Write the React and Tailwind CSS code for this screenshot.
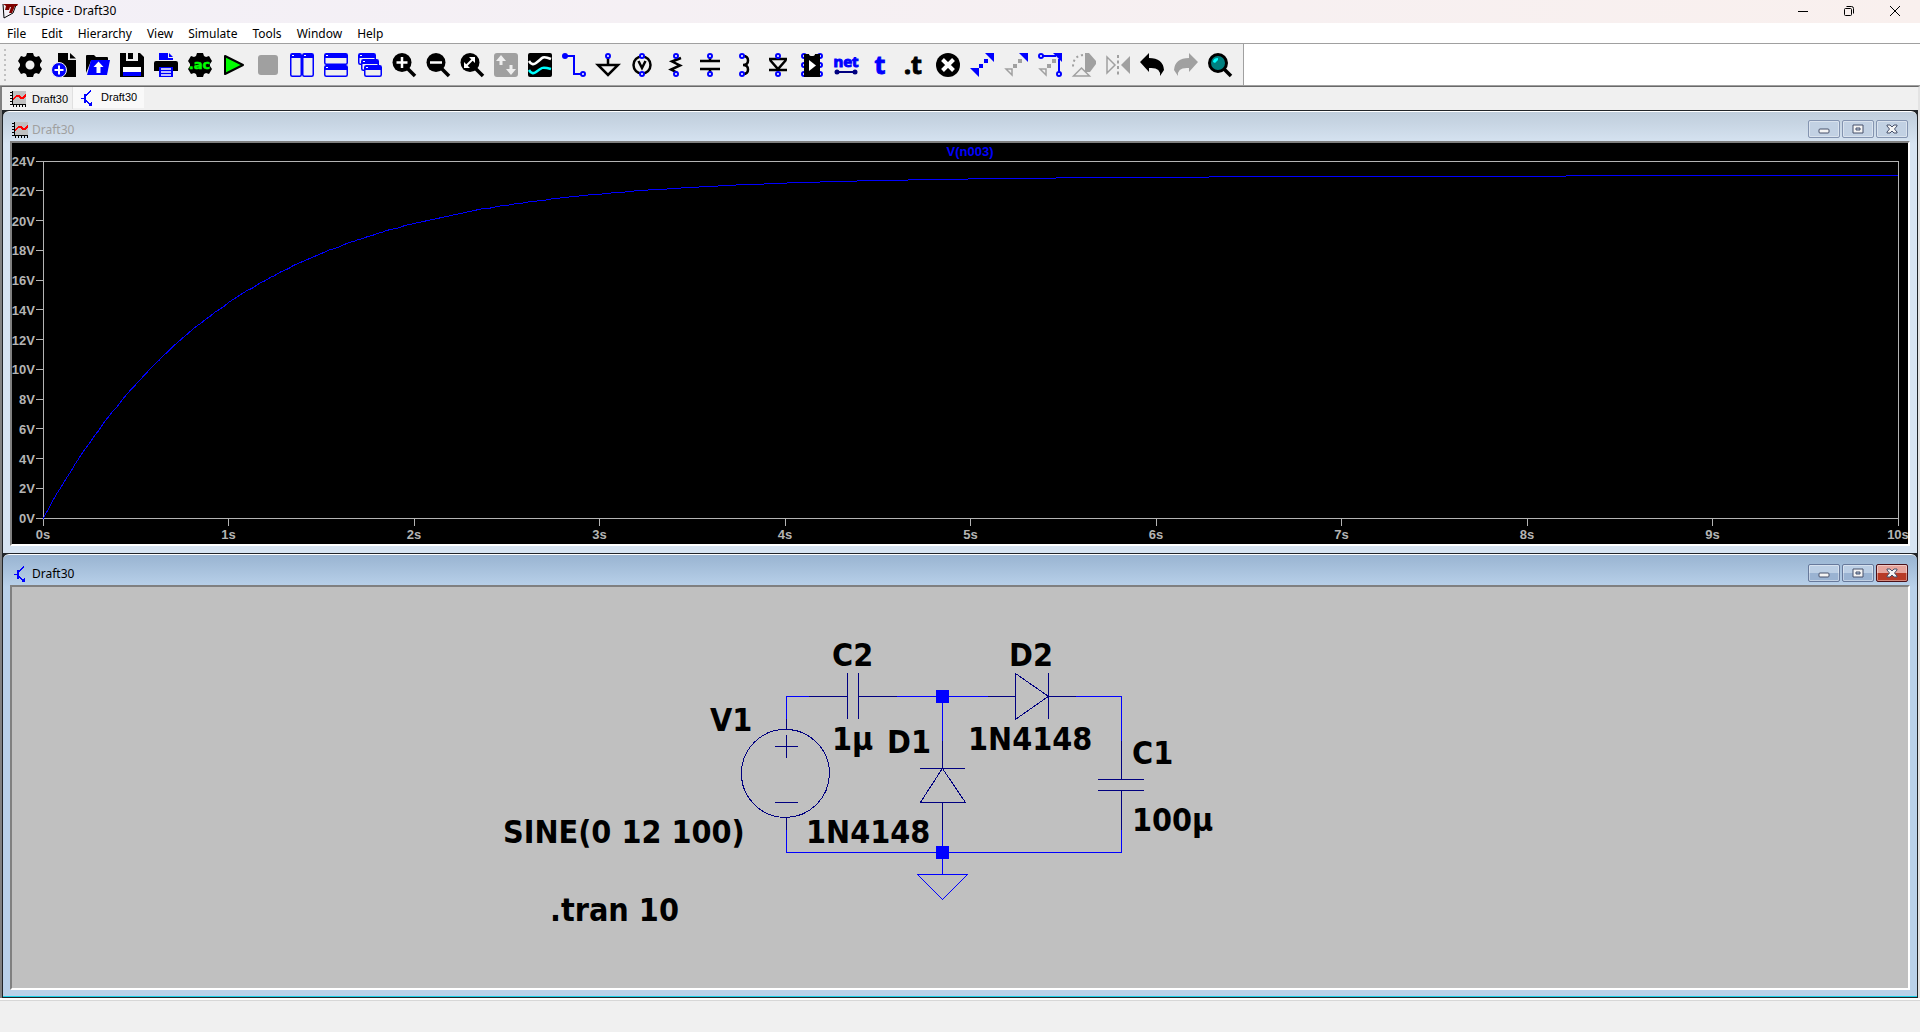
import { useState } from 'react';

const BLUE = '#0000ff';
const NAVY = '#000080';
const GRAY = '#a0a0a0';

const menus = ['File', 'Edit', 'Hierarchy', 'View', 'Simulate', 'Tools', 'Window', 'Help'];

const GEAR = 'M8 3 9 0h6l1 3 2 1 3-1 3 5-2 3v2l2 3-3 5-3-1-2 1-1 3H9l-1-3-2-1-3 1-3-5 2-3v-2L0 8l3-5 3 1z';

// Small open terminal used on the component icons
const Pin = ({ x, y }) => <circle cx={x} cy={y} r="2" fill="#fff" stroke={BLUE} strokeWidth="2" />;

const Lens = ({ children }) => (
  <>
    <path d="m15 15 8 8" stroke="#000" strokeWidth="3.5" />
    <circle cx="10" cy="9.5" r="9.5" />
    {children}
  </>
);

const MiniWindow = ({ x, y, w, h }) => (
  <>
    <rect x={x + 0.75} y={y + 0.75} width={w - 1.5} height={h - 1.5} rx="1.5" fill="#efefef" stroke={BLUE} strokeWidth="1.5" />
    <path d={`M${x + 1} ${y + 1}h${w - 2}v4h-${w - 2}z`} fill={BLUE} />
    <path d={`M${x + 2} ${y + 2}h2v1h-2z`} fill="#fff" />
  </>
);

// Every toolbar glyph lives on a 24x24 grid
const tools = [
  { name: 'Settings', icon: <path fillRule="evenodd" d={`${GEAR}M12 7.5a4.5 4.5 0 1 0 0 9 4.5 4.5 0 0 0 0-9z`} /> },
  {
    name: 'New schematic',
    icon: (
      <>
        <path d="M6 0h10v7h8v17H6zM18 0l6 5.5h-6z" />
        <circle cx="7" cy="17" r="7.5" fill={BLUE} stroke="#efefef" />
        <path d="M7 12.5v9M2.500 17h9" stroke="#fff" strokeWidth="2" />
      </>
    ),
  },
  {
    name: 'Open',
    icon: (
      <>
        <path d="M0 20V3q0-1 1-1h7l2 2h11q1 0 1 1v3H5z" />
        <path d="M5 7h19l-3 15H1z" fill={BLUE} />
        <path d="m12.500 8.500 5 5.500h-3v6h-4v-6h-3z" fill="#fff" />
      </>
    ),
  },
  {
    name: 'Save',
    icon: (
      <>
        <path d="M0 0h20l4 4v20H0z" />
        <path d="M6 0h12v8H6z" fill="#efefef" />
        <path d="M8 0h5v6H8z" />
        <path d="M3 14h18v5H3z" fill="#fff" />
        <path d="M3 19h18v4H3z" fill={BLUE} />
      </>
    ),
  },
  {
    name: 'Print',
    icon: (
      <>
        <path d="M5 0h9v5h5v2H5zM15 0l4 4h-4z" fill={BLUE} />
        <path d="M2 8h20q2 0 2 2v8h-5v-4H5v4H0v-8q0-2 2-2z" />
        <path d="M5 14h14v10H5z" fill={BLUE} />
        <path d="M7 16h10M7 19h10M7 22h10" stroke="#fff" strokeWidth="1.5" />
      </>
    ),
  },
  {
    name: 'Configure analysis',
    icon: (
      <>
        <path d={GEAR} />
        <text x="11.500" y="16" textAnchor="middle" fill="#00ff00" stroke="#00ff00" strokeWidth="0.500" className="font-[DejaVu_Sans,sans-serif] text-[13px] font-bold">.ac</text>
      </>
    ),
  },
  { name: 'Run', icon: <path d="m3 3 18 9-18 9z" fill="#00ff00" stroke="#000" strokeWidth="2" strokeLinejoin="round" /> },
  { name: 'Stop', icon: <rect x="2" y="2" width="20" height="20" rx="3" fill={GRAY} /> },
  {
    name: 'Tile vertically',
    icon: (
      <>
        <MiniWindow x={0} y={0} w={12} h={24} />
        <MiniWindow x={12} y={0} w={12} h={24} />
      </>
    ),
  },
  {
    name: 'Tile horizontally',
    icon: (
      <>
        <MiniWindow x={0} y={0} w={24} h={12} />
        <MiniWindow x={0} y={12} w={24} h={12} />
      </>
    ),
  },
  {
    name: 'Cascade',
    icon: (
      <>
        <MiniWindow x={0} y={0} w={18} h={12} />
        <MiniWindow x={3} y={6} w={18} h={12} />
        <MiniWindow x={6} y={12} w={18} h={12} />
      </>
    ),
  },
  { name: 'Zoom in', icon: <Lens><path d="M10 4v11M4.500 9.500h11" stroke="#fff" strokeWidth="2.500" /></Lens> },
  { name: 'Zoom out', icon: <Lens><path d="M4 9.500h12" stroke="#fff" strokeWidth="2.500" /></Lens> },
  {
    name: 'Zoom to fit',
    icon: (
      <Lens>
        <path d="m6 13 7-7" stroke="#fff" strokeWidth="2" />
        <path d="M9 4h6v6zM4 9v6h6z" fill="#fff" />
      </Lens>
    ),
  },
  {
    name: 'Autorange',
    icon: (
      <>
        <rect width="24" height="24" rx="3" fill={GRAY} />
        <path d="m7 2 5 6H8.500v4h-3V8H2zM17 22l-5-6h3.500v-4h3v4H22z" fill="#efefef" />
      </>
    ),
  },
  {
    name: 'Pick visible traces',
    icon: (
      <>
        <rect width="24" height="24" rx="2" />
        <path d="M1 8q3 5 7 2t6-5 9 1" fill="none" stroke="#fff" strokeWidth="2.500" />
        <path d="M1 17q3 5 7 2t6-4 9 1" fill="none" stroke="#00ffff" strokeWidth="2.500" />
      </>
    ),
  },
  {
    name: 'Wire',
    icon: (
      <>
        <path d="M3 3h9v18h9" fill="none" stroke={BLUE} strokeWidth="2" />
        <circle cx="3" cy="3" r="3" fill={BLUE} />
        <Pin x={21} y={21} />
      </>
    ),
  },
  {
    name: 'Ground',
    icon: (
      <>
        <path d="M12 5v7M2 12h20l-10 10z" fill="none" stroke="#000" strokeWidth="2.500" />
        <Pin x={12} y={3} />
      </>
    ),
  },
  {
    name: 'Voltage source',
    icon: (
      <>
        <circle cx="12" cy="12" r="8.500" fill="none" stroke="#000" strokeWidth="2.500" />
        <path d="m8.500 8 3.500 7 3.500-7" fill="none" stroke="#000" strokeWidth="2.500" />
        <Pin x={12} y={3} />
        <Pin x={12} y={21} />
      </>
    ),
  },
  {
    name: 'Resistor',
    icon: (
      <>
        <path d="M17 5 8 8.500l8 4-9 4 6 3" fill="none" stroke="#000" strokeWidth="2.500" />
        <Pin x={12} y={3} />
        <Pin x={12} y={21} />
      </>
    ),
  },
  {
    name: 'Capacitor',
    icon: (
      <>
        <path d="M2 8h20M2 16h20M12 4v4M12 16v4" stroke="#000" strokeWidth="2.500" />
        <Pin x={12} y={3} />
        <Pin x={12} y={21} />
      </>
    ),
  },
  {
    name: 'Inductor',
    icon: (
      <>
        <path d="M11 3q5 0 5 4.500T11 12q5 0 5 4.500T11 21" fill="none" stroke="#000" strokeWidth="2.500" />
        <Pin x={10} y={3} />
        <Pin x={10} y={21} />
      </>
    ),
  },
  {
    name: 'Diode',
    icon: (
      <>
        <path d="M3 6h18M4 7l8 9 8-9M3 17h18" fill="none" stroke="#000" strokeWidth="2.500" />
        <Pin x={12} y={3} />
        <Pin x={12} y={21} />
      </>
    ),
  },
  {
    name: 'Component',
    icon: (
      <>
        {[3, 12, 21].map((y) => (
          <g key={y}>
            <Pin x={4} y={y} />
            <Pin x={20} y={y} />
          </g>
        ))}
        <path d="M4 1h5q0 2 3 2t3-2h5v23H4z" />
        <path d="m9 7 7 5.500L9 18z" fill="#fff" />
      </>
    ),
  },
  {
    name: 'Net name',
    icon: (
      <>
        <text x="12" y="14" textAnchor="middle" fill={BLUE} stroke={BLUE} className="font-[Noto_Sans,sans-serif] text-[15px] font-bold">net</text>
        <path d="M3 19h18" stroke={NAVY} strokeWidth="2" />
        <circle cx="3" cy="19" r="2.500" fill={NAVY} />
        <circle cx="21" cy="19" r="2.500" fill={NAVY} />
      </>
    ),
  },
  {
    name: 'Text',
    icon: <text x="12" y="21" textAnchor="middle" fill={BLUE} stroke={BLUE} className="font-[Noto_Sans,sans-serif] text-[25px] font-bold">t</text>,
  },
  {
    name: 'SPICE directive',
    icon: <text x="11" y="21" textAnchor="middle" stroke="#000" className="font-[Noto_Sans,sans-serif] text-[25px] font-bold">.t</text>,
  },
  {
    name: 'Delete',
    icon: (
      <>
        <circle cx="12" cy="12" r="12" />
        <path d="m6.500 6.500 11 11M17.500 6.500l-11 11" stroke="#fff" strokeWidth="4" />
      </>
    ),
  },
  {
    name: 'Move',
    icon: <path d="M15 0h9v9zM0 15h9v9zM14 6h4v4h-4zM9 11h4v4H9zM6 15h3v3H6z" fill={BLUE} />,
  },
  {
    name: 'Copy',
    icon: (
      <>
        <path d="M15 0h9v9z" fill={BLUE} />
        <path d="M14 6h4v4h-4zM9 11h4v4H9z" fill={GRAY} />
        <path d="M2 16h6v6z" fill="none" stroke={GRAY} strokeWidth="1.500" />
      </>
    ),
  },
  {
    name: 'Drag',
    icon: (
      <>
        <path d="M15 0h9v9z" fill={BLUE} />
        <path d="M3 3h15M21 6v15" stroke={BLUE} strokeWidth="2" />
        <path d="M14 6h4v4h-4zM9 11h4v4H9z" fill={GRAY} />
        <path d="M2 16h6v6z" fill="none" stroke={GRAY} strokeWidth="1.500" />
        <Pin x={3} y={3} />
        <Pin x={21} y={21} />
      </>
    ),
  },
  {
    name: 'Rotate',
    icon: (
      <>
        <path d="M13 0h4l7 8v3l-6 8h-5z" fill={GRAY} />
        <path d="M11 2Q1 3 1 14" fill="none" stroke={GRAY} strokeWidth="2" strokeDasharray="2 3" />
        <path d="m9.500 15 8 8h-16z" fill="#efefef" stroke={GRAY} strokeWidth="1.500" />
      </>
    ),
  },
  {
    name: 'Mirror',
    icon: (
      <>
        <path d="M24 3v18l-9-9z" fill={GRAY} />
        <path d="M1 4v16l8-8z" fill="none" stroke={GRAY} strokeWidth="1.500" />
        <path d="M12 2v20" stroke={GRAY} strokeWidth="2" strokeDasharray="3 2.500" />
      </>
    ),
  },
  { name: 'Undo', icon: <path d="m0 9 9-9v5q14 0 15 12l-4 6q1-9-11-8v4z" /> },
  { name: 'Redo', icon: <path d="m24 9-9-9v5Q1 5 0 17l4 6q-1-9 11-8v4z" fill={GRAY} /> },
  {
    name: 'Find',
    icon: (
      <>
        <path d="m15 15 8 8" stroke="#000" strokeWidth="3.500" />
        <circle cx="10" cy="10" r="8.500" fill="#008080" stroke="#000" strokeWidth="3" />
        <path d="M5 9q0-4 5-4v2L7 10z" fill="#00ffff" />
      </>
    ),
  },
];

const PlotIcon = () => (
  <svg width="16" height="16" shapeRendering="crispEdges">
    <path d="M2 0h14v14H2z" fill="#c0c0c0" />
    <path d="M2.500 0v13.500H16" fill="none" stroke="#000" />
    <path d="M0 1.500h2M0 4.500h2M0 7.500h2M0 10.500h2M0 13.500h2M3.500 14v2M6.500 14v2M9.500 14v2M12.500 14v2M15.500 14v2" stroke="#000" />
    <path d="m3 8 4-3 2 0 2 2h2l3-3" fill="none" stroke="#ff0000" strokeWidth="1.500" />
  </svg>
);

const SchematicIcon = () => (
  <svg width="16" height="16" shapeRendering="crispEdges">
    <path d="M2 8.500h3M7 5.500l5-5M7 10.500l5 5" fill="none" stroke={BLUE} />
    <path d="M6 4v9" stroke={BLUE} strokeWidth="2" />
    <path d="M13 16H9l1-1 1-2 2-1z" fill={BLUE} />
  </svg>
);

// Window buttons of the two document windows
const frameButtons = [
  { label: 'Minimize', icon: <rect x="1" y="8" width="10" height="4" rx="1" /> },
  { label: 'Maximize', icon: <path fillRule="evenodd" d="M1 4h10v8H1zM4 7v2h4V7z" /> },
  { label: 'Close', icon: <path d="M1 4h3l2 2 2-2h3v1L8.500 8l2.500 3v1H8l-2-2-2 2H1v-1l2.500-3L1 5z" /> },
];

const FrameButton = ({ label, icon, active }) => {
  const tone = !active
    ? 'border-[#8494b0] bg-[#c2d1e3]'
    : label === 'Close'
    ? 'border-[#4b1018] bg-linear-to-b from-[#e6a49c] from-50% to-[#b83a26] to-50%'
    : 'border-[#67799b] bg-linear-to-b from-[#bccfe5] from-50% to-[#9ab3d2] to-50%';
  return (
    <button aria-label={label} className={`flex h-[18px] w-8 items-center justify-center rounded-xs border inset-ring inset-ring-white/40 ${tone}`}>
      <svg width="12" height="16" fill="#f4f4f4" stroke="#47506a">{icon}</svg>
    </button>
  );
};

const MdiWindow = ({ title, icon, active, children }) => (
  <section
    className={`rounded-t-md border-t border-white px-[7px] ${
      active
        ? 'border-b border-b-[#19d0e8] bg-linear-to-b from-[#99b4d1] to-[#b9d1ea] to-[32px] pb-[6px]'
        : 'bg-linear-to-b from-[#bfcddb] to-[#d7e4f2] to-[32px] pb-[7px]'
    }`}
  >
    <header className={`flex items-end px-[2px] pb-[3px] ${active ? 'h-[30px]' : 'h-[29px]'}`}>
      {icon}
      <h2 className={`ml-1 flex-1 text-[12px] leading-4 ${active ? 'text-black' : 'text-[#a0a0a0]'}`}>{title}</h2>
      <div className="flex gap-[2px]">
        {frameButtons.map((b) => (
          <FrameButton key={b.label} {...b} active={active} />
        ))}
      </div>
    </header>
    <div className="border-2 border-t-[#808080] border-r-white border-b-white border-l-[#808080]">{children}</div>
  </section>
);

// Plot area inside the waveform pane
const X0 = 31;
const X1 = 1886;
const Y0 = 375;
const Y1 = 18;
const toX = (t) => X0 + ((X1 - X0) * t) / 10;
const toY = (v) => Y0 - ((Y0 - Y1) * v) / 24;

// Snapped to whole pixels so the flat part of the trace stays unbroken
const trace = Array.from({ length: 401 }, (_, i) => {
  const t = i / 40;
  const v = 22.9 * (1 - Math.exp(-t)) + 0.016 * t;
  return `${toX(t).toFixed(1)},${Math.round(toY(v)) + 0.5}`;
}).join(' ');

const Waveform = () => (
  <svg viewBox="0 0 1896 401" className="block h-auto w-full bg-black font-[Liberation_Sans,Arial,sans-serif] text-[13px] font-bold">
    <g shapeRendering="crispEdges" fill="none" stroke="#b4b4b4">
      <rect x={X0 + 0.5} y={Y1 + 0.5} width={X1 - X0} height={Y0 - Y1} />
      {Array.from({ length: 13 }, (_, i) => (
        <path key={i} d={`M${X0 - 7} ${Math.floor(toY(i * 2)) + 0.5}h7`} />
      ))}
      {Array.from({ length: 11 }, (_, i) => (
        <path key={i} d={`M${Math.floor(toX(i)) + 0.5} ${Y0}v8`} />
      ))}
      <polyline points={trace} stroke={BLUE} />
    </g>
    <g fill="#b4b4b4">
      {Array.from({ length: 13 }, (_, i) => (
        <text key={i} x={X0 - 8} y={Math.round(toY(i * 2)) + 5} textAnchor="end">{i * 2}V</text>
      ))}
      {Array.from({ length: 11 }, (_, i) => (
        <text key={i} x={toX(i)} y={Y0 + 21} textAnchor="middle">{i}s</text>
      ))}
    </g>
    <text x={958} y={13} textAnchor="middle" fill={BLUE}>V(n003)</text>
  </svg>
);

const labels = [
  { x: 820, y: 79, text: 'C2' },
  { x: 698, y: 144, text: 'V1' },
  { x: 820, y: 163, text: '1µ' },
  { x: 875, y: 166, text: 'D1' },
  { x: 997, y: 79, text: 'D2' },
  { x: 956, y: 163, text: '1N4148' },
  { x: 1120, y: 177, text: 'C1' },
  { x: 1120, y: 244, text: '100µ' },
  { x: 491, y: 256, text: 'SINE(0 12 100)' },
  { x: 794, y: 256, text: '1N4148' },
  { x: 538, y: 334, text: '.tran 10' },
];

const Schematic = () => (
  <svg viewBox="0 0 1896 401" className="block h-auto w-full bg-[#c0c0c0]">
    <g shapeRendering="crispEdges" fill="none" transform="translate(0.4 0.4)">
      {/* wires */}
      <path
        stroke={BLUE}
        d="M774 142V109H836M846 109H1003M1036 109H1109V192M1109 203V265H774V230M930 109V181M930 215V287M905 287h50l-25 25z"
      />
      {/* component bodies */}
      <g stroke={NAVY}>
        <path d="M774 132v10M774 230v13M763 159h23M774 148v23M763 215h23" />
        <circle cx="773" cy="186" r="44" />
        <path d="M797 109h38M835 86v46M846 86v46M846 109h39" />
        <path d="M976 109h27M1003 86v46l33-23zM1036 86v46M1036 109h28" />
        <path d="M930 154v27M908 181h45M930 181l-22 34h45zM930 215v28" />
        <path d="M1109 154v38M1086 192h46M1086 203h46M1109 203v40" />
      </g>
    </g>
    <path d="M924 103h13v13h-13zM924 259h13v13h-13z" fill={BLUE} />
    <g className="font-[DejaVu_Sans_Condensed,DejaVu_Sans,sans-serif] text-[32px] font-bold">
      {labels.map((l) => (
        <text key={`${l.text}-${l.x}`} x={l.x} y={l.y}>{l.text}</text>
      ))}
    </g>
  </svg>
);

const App = () => {
  const [tab, setTab] = useState('schematic');

  return (
    <div className="flex min-h-screen flex-col bg-[#f0f0f0] font-[Noto_Sans,Open_Sans,sans-serif] text-[12px] text-black">
      {/* Title bar */}
      <header className="flex h-[23px] items-center bg-linear-to-r from-[#f3f0f7] to-[#f9f0ee] px-[2px] pb-[2px]">
        <svg width="16" height="16" fill="none">
          <path d="m1 1 1 14 9-5 3-8" stroke="#000" />
          <path d="M1 1h15l-1 2h-2l-3 7H7l2-6H8L7 7H3l1-4z" fill="#800000" />
        </svg>
        <h1 className="ml-[5px] flex-1 leading-4">LTspice - Draft30</h1>
        <button aria-label="Minimize" className="flex w-[46px] justify-center">
          <svg width="10" height="10" stroke="#000"><path d="M0 5.500h10" /></svg>
        </button>
        <button aria-label="Restore" className="flex w-[46px] justify-center">
          <svg width="10" height="10" fill="none" stroke="#000">
            <rect x="0.500" y="2.500" width="7" height="7" rx="1" />
            <path d="M2.500.500h5q2 0 2 2v5" />
          </svg>
        </button>
        <button aria-label="Close" className="flex w-[46px] justify-center">
          <svg width="10" height="10" stroke="#000"><path d="m0 0 10 10M10 0 0 10" /></svg>
        </button>
      </header>

      <nav className="flex h-[21px] items-end gap-[15px] border-b border-[#a0a0a0] bg-white px-[7px] pb-[1px]">
        {menus.map((m) => (
          <button key={m} className="leading-4">{m}</button>
        ))}
      </nav>

      {/* Toolbar */}
      <div className="flex h-[41px] bg-white">
        <div className="flex items-center border-r border-[#a0a0a0] bg-[#f0f0f0] pr-[6px]">
          <div className="mr-[7px] ml-1 h-8 w-[2px] bg-[repeating-linear-gradient(#c0c0c0_0_2px,transparent_2px_5px)]" />
          {tools.map((t) => (
            <button key={t.name} aria-label={t.name} className="flex w-[34px] justify-center">
              <svg width="24" height="24" className="overflow-visible">{t.icon}</svg>
            </button>
          ))}
        </div>
      </div>

      <main className="border-t border-[#a0a0a0]">
        <div className="border-t border-r-2 border-l-2 border-t-[#696969] border-r-[#e3e3e3] border-l-[#808080]">
          {/* Document tabs */}
          <div className="flex h-[23px] items-start pl-[2px] font-[Liberation_Sans,Arial,sans-serif] text-[11px]">
            <button onClick={() => setTab('plot')} className="flex h-[22px] items-center gap-[6px] border-r border-[#e0e0e0] pt-[2px] pr-1 pl-[6px]">
              <PlotIcon /> Draft30
            </button>
            <button onClick={() => setTab('schematic')} className="flex h-[21px] items-center gap-[6px] bg-[#f9f9f9] pr-[7px] pl-[6px]">
              <SchematicIcon /> Draft30
            </button>
          </div>
          <div className="flex flex-col gap-[1px] border border-[#202428] bg-[#202428]">
            <MdiWindow title="Draft30" icon={<PlotIcon />} active={tab === 'plot'}>
              <Waveform />
            </MdiWindow>
            <MdiWindow title="Draft30" icon={<SchematicIcon />} active={tab === 'schematic'}>
              <Schematic />
            </MdiWindow>
          </div>
        </div>
      </main>

      {/* Status bar */}
      <footer className="flex-1 border-t-2 border-white">
        <div className="h-full border-t border-r border-[#d7d7d7]" />
      </footer>
    </div>
  );
};

export default App;
